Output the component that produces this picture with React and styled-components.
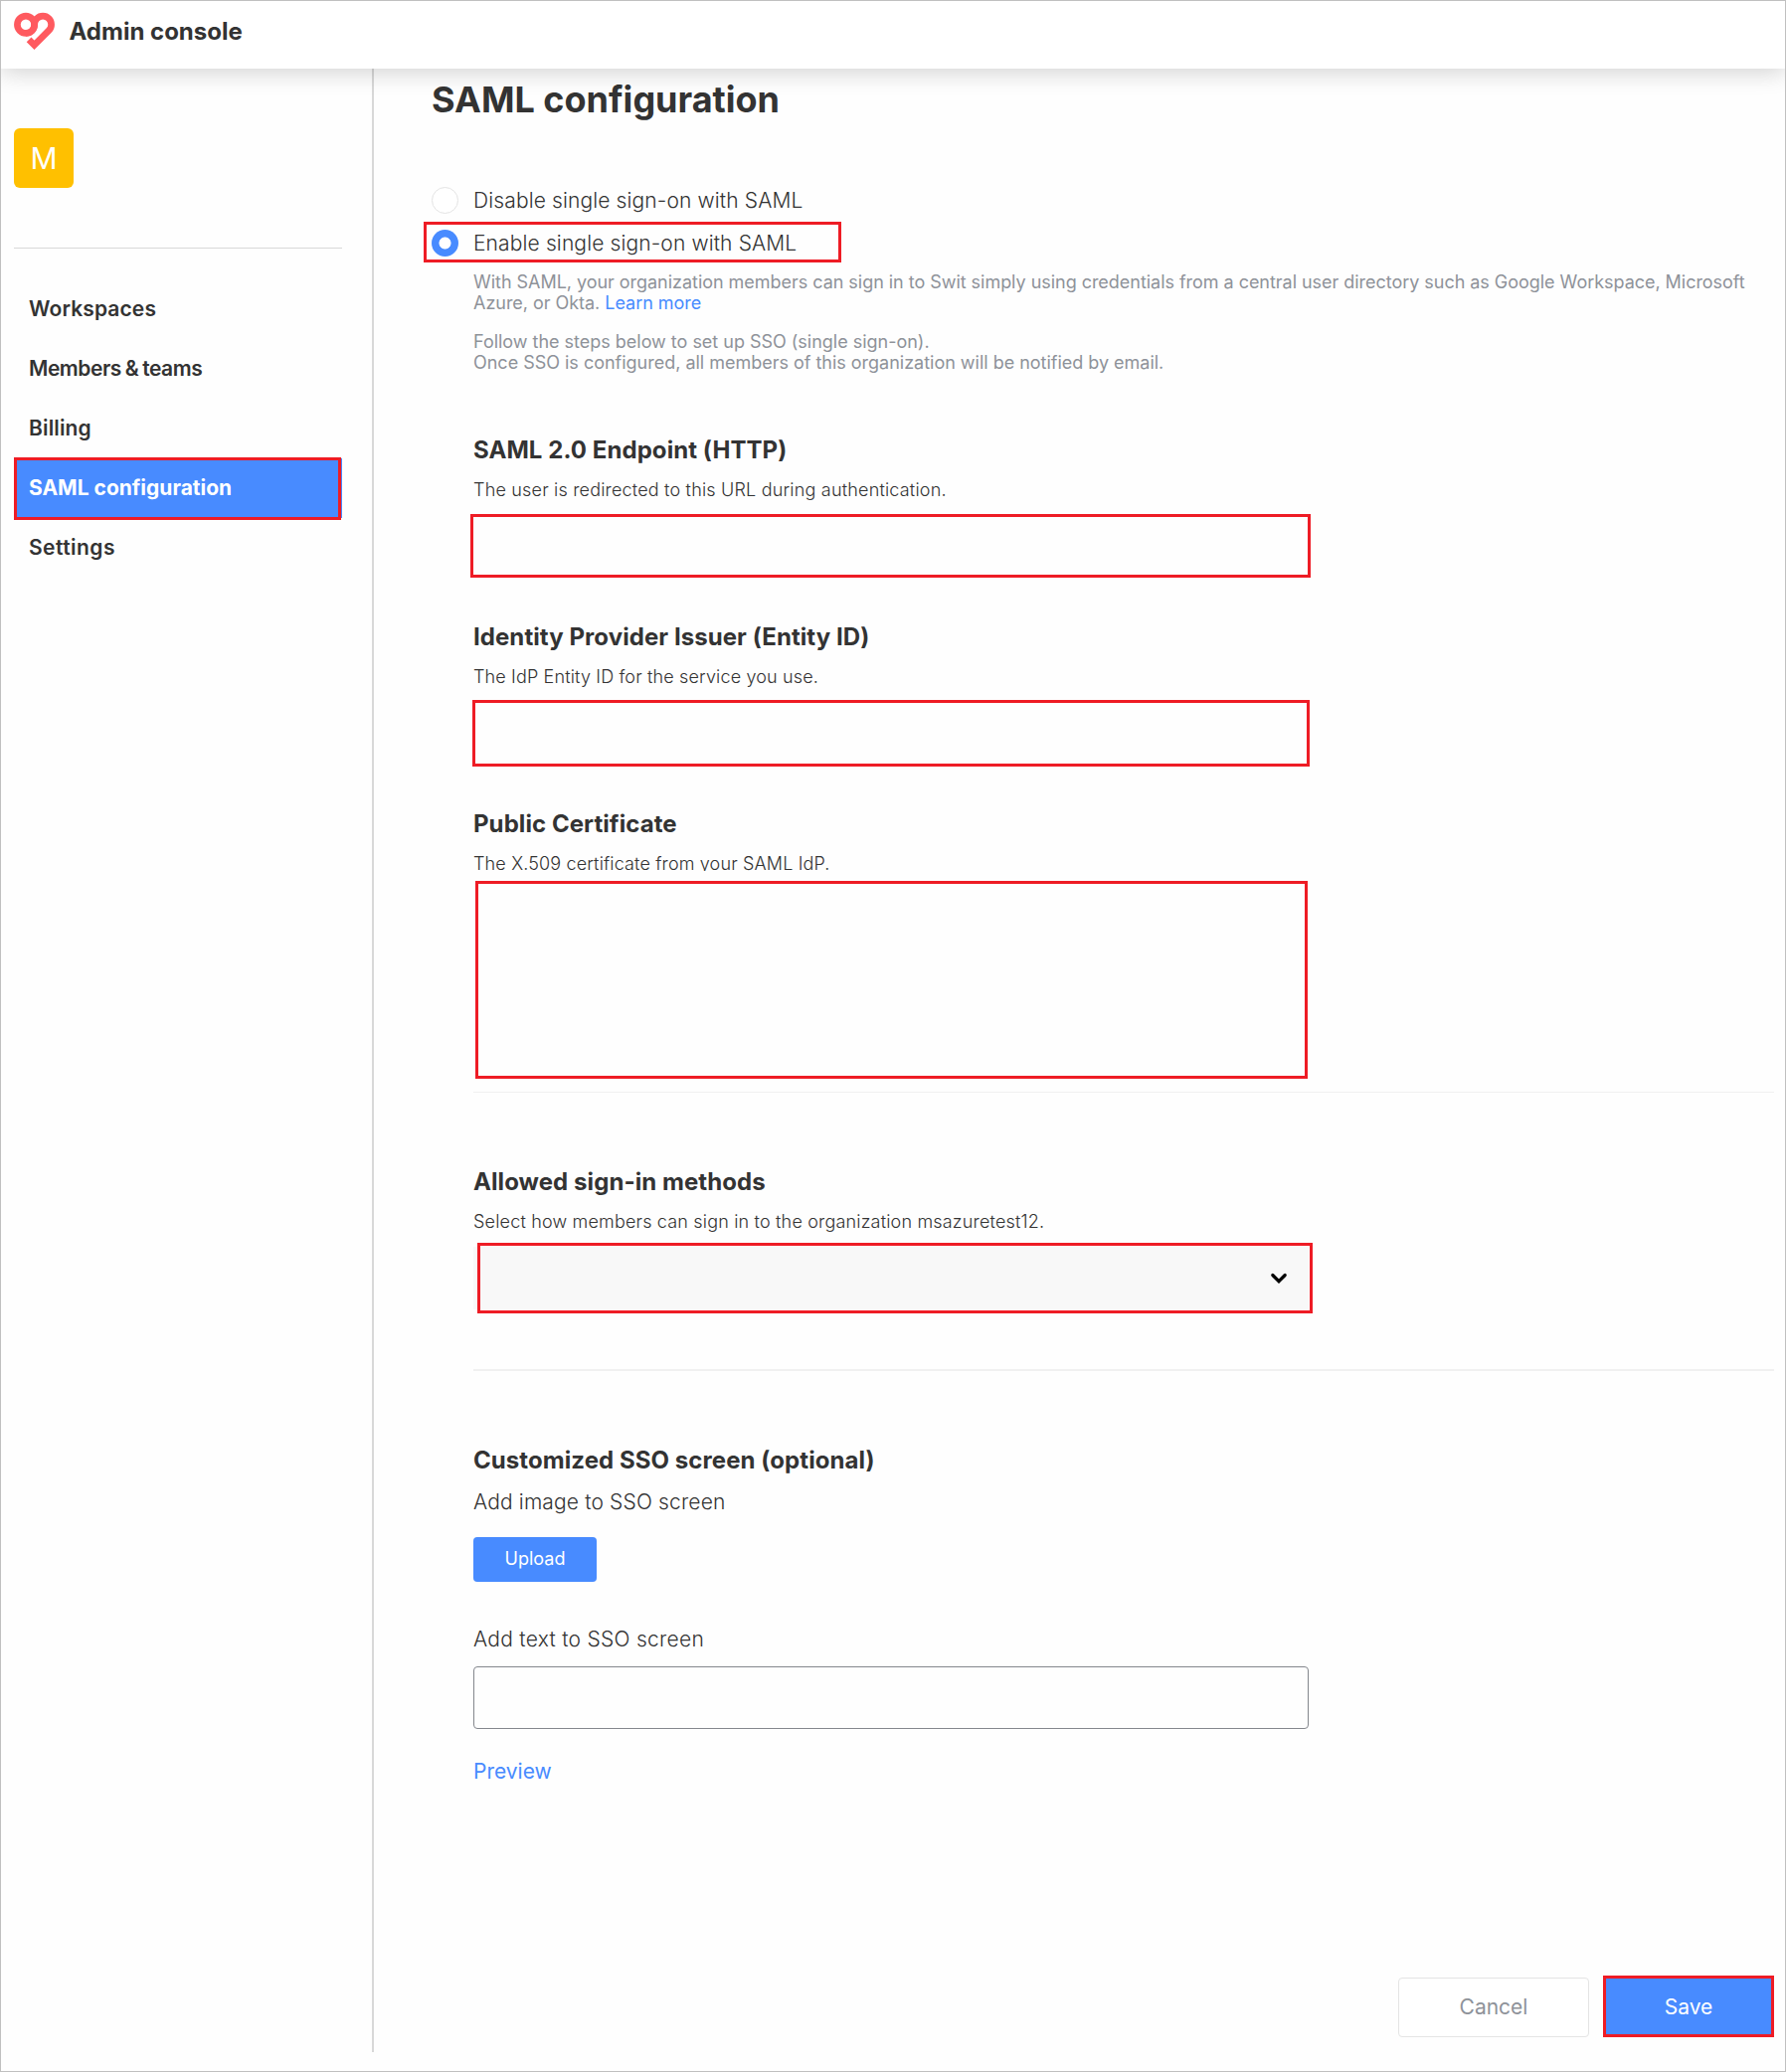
import React from "react";
import styled, { createGlobalStyle } from "styled-components";

const GlobalStyle = createGlobalStyle`
  *, *::before, *::after { box-sizing: border-box; }
  body {
    margin: 0;
    background: #fefefe;
    color: #333;
    font-family: Inter, "Liberation Sans", sans-serif;
  }
  h1, h2, p { margin: 0; }
`;

const RED = "#ee1c25";
const BLUE = "#488bff";

const Page = styled.div`
  display: flex;
  flex-direction: column;
  width: 1796px;
  height: 2084px;
  border: 1px solid #c0c0c0;
`;

const Header = styled.header`
  display: flex;
  align-items: flex-start;
  flex: none;
  height: 68px;
  padding: 12px 13px 0;
  background: #fff;
  box-shadow: 0 3px 24px rgba(0, 0, 0, 0.19);
  clip-path: inset(0 0 -40px 0);
  z-index: 1;
`;

const Logo = styled.svg`
  display: block;
  width: 41px;
  height: 37px;
  overflow: visible;
`;

const Brand = styled.div`
  margin: 4px 0 0 14.5px;
  font-size: 24px;
  line-height: 29px;
  font-weight: 700;
`;

const Body = styled.div`
  display: flex;
  height: 1995px;
`;

const Sidebar = styled.aside`
  width: 375px;
  padding: 60px 30px 0 13px;
  border-right: 2px solid #d8d8d8;
`;

const Avatar = styled.div`
  display: grid;
  place-items: center;
  width: 60px;
  height: 60px;
  border-radius: 6px;
  background: #ffc000;
  color: #fff;
  font-size: 30px;
  line-height: 36px;
`;

const SidebarRule = styled.div`
  height: 1px;
  margin-top: 60px;
  background: #d8d8d8;
`;

const Nav = styled.nav`
  display: flex;
  flex-direction: column;
  padding-top: 31px;
`;

const NavItem = styled.a`
  position: relative;
  display: flex;
  align-items: center;
  height: 60px;
  padding: 0 0 1px 15px;
  font-size: 21px;
  line-height: 25px;
  font-weight: ${(p) => (p.$active ? 700 : 600)};
  letter-spacing: ${(p) => p.$spacing || 0}px;
  word-spacing: ${(p) => p.$wordSpacing || 0}px;
  color: ${(p) => (p.$active ? "#fff" : "#333")};
  background: ${(p) => (p.$active ? BLUE : "transparent")};
`;

const Highlight = styled.span`
  position: absolute;
  top: ${(p) => p.$top}px;
  right: ${(p) => p.$right}px;
  bottom: ${(p) => p.$bottom}px;
  left: ${(p) => p.$left}px;
  border: 3px solid ${RED};
  pointer-events: none;
`;

const Main = styled.main`
  display: flex;
  flex-direction: column;
  flex: 1;
  padding: 9px 11px 15px 58px;
`;

const Title = styled.h1`
  font-size: 36px;
  line-height: 44px;
  font-weight: 700;
`;

const Option = styled.label`
  display: flex;
  align-items: center;
  gap: 15px;
  height: 27px;
  margin-top: 66px;
  font-size: 21px;
  line-height: 27px;
  font-weight: 300;
  letter-spacing: 0.125px;
`;

const FramedOption = styled(Option)`
  width: 420px;
  height: 41px;
  margin: 8px 0 0 -8px;
  padding: 5px 5px 3px;
  border: 3px solid ${RED};
`;

const Radio = styled.span`
  flex: none;
  width: 27px;
  height: 27px;
  border-radius: 50%;
  border: ${(p) => (p.$checked ? "none" : "1px solid #e4e4e4")};
  background: ${(p) => (p.$checked ? `radial-gradient(circle, #fff 5.6px, ${BLUE} 6.4px)` : "#fff")};
`;

const Form = styled.div`
  display: flex;
  flex-direction: column;
  align-items: flex-start;
  padding-left: 42px;
`;

const Note = styled.p`
  margin-top: ${(p) => p.$gap}px;
  font-size: 18px;
  line-height: 21px;
  font-weight: 400;
  letter-spacing: ${(p) => p.$spacing}px;
  color: #8e9299;
`;

const Link = styled.a`
  color: ${BLUE};
`;

const SectionTitle = styled.h2`
  margin-top: ${(p) => p.$gap}px;
  font-size: 24px;
  line-height: 30px;
  font-weight: 700;
  letter-spacing: 0.07px;
`;

const Hint = styled.p`
  height: ${(p) => p.$height || 21}px;
  margin-top: 14px;
  overflow: ${(p) => (p.$height ? "hidden" : "visible")};
  font-size: 18px;
  line-height: 21px;
  font-weight: 300;
  letter-spacing: ${(p) => p.$spacing}px;
`;

const Label = styled.div`
  height: ${(p) => p.$height || 25}px;
  margin-top: ${(p) => p.$gap}px;
  font-size: 21px;
  line-height: 25px;
  font-weight: 300;
  letter-spacing: ${(p) => p.$spacing}px;
`;

const Field = styled.div`
  width: ${(p) => p.$width}px;
  height: ${(p) => p.$height}px;
  margin-top: ${(p) => p.$gap}px;
  margin-left: ${(p) => p.$shift || 0}px;
  border: 3px solid ${RED};
`;

const TextInput = styled.div`
  width: 840px;
  height: 63px;
  margin-top: 15px;
  border: 1px solid #84878d;
  border-radius: 4px;
`;

const Rule = styled.div`
  align-self: stretch;
  height: ${(p) => p.$size}px;
  margin-top: ${(p) => p.$gap}px;
  background: #f0f0f0;
`;

const Select = styled.div`
  position: relative;
  display: flex;
  align-items: center;
  justify-content: flex-end;
  width: 840px;
  height: 63px;
  margin-top: 15px;
  padding: 0 21.5px 0 0;
  background: #f8f8f8;
`;

const UploadButton = styled.div`
  width: 124px;
  height: 45px;
  margin-top: 24px;
  border-radius: 4px;
  background: ${BLUE};
  color: #fff;
  font-size: 18px;
  line-height: 44px;
  text-align: center;
`;

const Preview = styled.a`
  margin-top: 30px;
  font-size: 21px;
  line-height: 25px;
  color: ${BLUE};
`;

const Actions = styled.div`
  display: flex;
  justify-content: flex-end;
  align-items: flex-end;
  gap: 14px;
  margin-top: auto;
`;

const Button = styled.div`
  display: grid;
  place-items: center;
  width: ${(p) => (p.$primary ? 172 : 192)}px;
  height: ${(p) => (p.$primary ? 62 : 60)}px;
  padding-bottom: ${(p) => (p.$primary ? 0 : 2)}px;
  border: ${(p) => (p.$primary ? `3px solid ${RED}` : "1px solid #e4e4e4")};
  border-radius: ${(p) => (p.$primary ? 0 : 4)}px;
  background: ${(p) => (p.$primary ? BLUE : "#fff")};
  color: ${(p) => (p.$primary ? "#fff" : "#8e9299")};
  font-size: 21px;
  line-height: 25px;
`;

export default function App() {
  return (
    <Page>
      <GlobalStyle />
      <Header>
        <Logo viewBox="0 0 41 37" fill="none" stroke="#ff5a5f" strokeWidth="6.7">
          <circle cx="12" cy="11.7" r="8.6" />
          <path d="M20.6 12.5V11.7A8.5 8.5 0 0 1 37.6 11.7C37.6 14 36.7 16.1 35.1 17.7L20.5 32.3L15.1 26.9" />
          <path d="M12 20.3C17.5 20.3 20.6 16.5 20.6 11.7" />
        </Logo>
        <Brand>Admin console</Brand>
      </Header>
      <Body>
        <Sidebar>
          <Avatar>M</Avatar>
          <SidebarRule />
          <Nav>
            <NavItem $spacing={0.12}>Workspaces</NavItem>
            <NavItem $spacing={-0.46} $wordSpacing={-0.9}>
              Members &amp; teams
            </NavItem>
            <NavItem $spacing={0.15}>Billing</NavItem>
            <NavItem $active>
              SAML configuration
              <Highlight $top={-1} $right={1} $bottom={-2} $left={0} />
            </NavItem>
            <NavItem $spacing={0.45}>Settings</NavItem>
          </Nav>
        </Sidebar>
        <Main>
          <Title>SAML configuration</Title>
          <Option>
            <Radio />
            Disable single sign-on with SAML
          </Option>
          <FramedOption>
            <Radio $checked />
            Enable single sign-on with SAML
          </FramedOption>
          <Form>
            <Note $gap={9} $spacing={-0.034}>
              With SAML, your organization members can sign in to Swit simply using credentials from a central user
              directory such as Google Workspace, Microsoft
              <br />
              Azure, or Okta. <Link>Learn more</Link>
            </Note>
            <Note $gap={18} $spacing={-0.015}>
              Follow the steps below to set up SSO (single sign-on).
              <br />
              Once SSO is configured, all members of this organization will be notified by email.
            </Note>

            <SectionTitle $gap={63}>SAML 2.0 Endpoint (HTTP)</SectionTitle>
            <Hint $spacing={0.187}>The user is redirected to this URL during authentication.</Hint>
            <Field $gap={14} $width={845} $height={64} $shift={-3} />

            <SectionTitle $gap={45}>Identity Provider Issuer (Entity ID)</SectionTitle>
            <Hint $spacing={0.143}>The IdP Entity ID for the service you use.</Hint>
            <Field $gap={13} $width={842} $height={67} $shift={-1} />

            <SectionTitle $gap={43}>Public Certificate</SectionTitle>
            <Hint $height={18} $spacing={0.147}>
              The X.509 certificate from your SAML IdP.
            </Hint>
            <Field $gap={10} $width={837} $height={199} $shift={2} />
            <Rule $gap={13} $size={1} />

            <SectionTitle $gap={75}>Allowed sign-in methods</SectionTitle>
            <Hint $spacing={0.175}>Select how members can sign in to the organization msazuretest12.</Hint>
            <Select>
              <svg width="18" height="12" viewBox="0 0 18 12" fill="none">
                <path d="M2.8 2.5L9 8.7L15.2 2.5" stroke="#000" strokeWidth="3.2" strokeLinecap="round" />
              </svg>
              <Highlight $top={-4} $right={-4} $bottom={-4} $left={4} />
            </Select>
            <Rule $gap={60} $size={2} />

            <SectionTitle $gap={75}>Customized SSO screen (optional)</SectionTitle>
            <Label $gap={14} $height={24} $spacing={0.15}>
              Add image to SSO screen
            </Label>
            <UploadButton>Upload</UploadButton>
            <Label $gap={45} $spacing={0.28}>
              Add text to SSO screen
            </Label>
            <TextInput />
            <Preview>Preview</Preview>
          </Form>
          <Actions>
            <Button>Cancel</Button>
            <Button $primary>Save</Button>
          </Actions>
        </Main>
      </Body>
    </Page>
  );
}
